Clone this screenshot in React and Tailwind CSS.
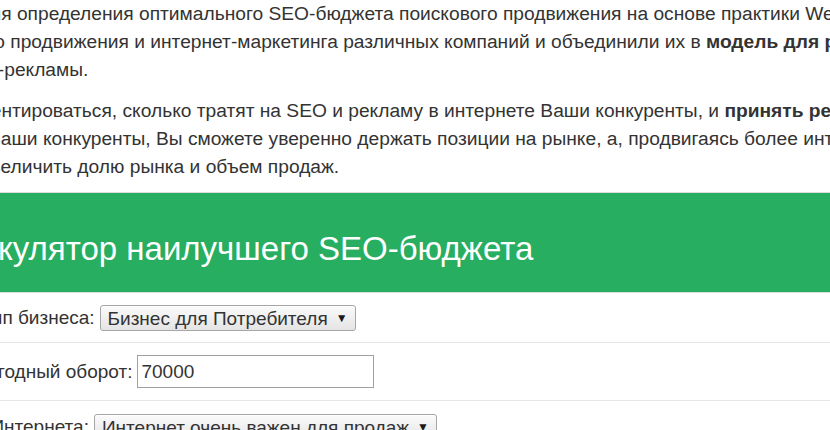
import React from 'react';

const Select = ({ value }) => (
  <div className="flex h-[26px] items-center rounded-[3px] border border-[#a6a6a6] bg-gradient-to-b from-[#fbfbfb] to-[#e4e4e4] pl-[7px] pr-[7px] text-[19px] leading-none text-[#333] shadow-[inset_0_1px_0_#fff]">
    <span>{value}</span>
    <span className="ml-[8px] text-[12px] text-[#1a1a1a]">▼</span>
  </div>
);

const App = () => {
  return (
    <div className="h-[430px] w-[830px] overflow-hidden bg-white font-['Liberation_Sans',Arial,sans-serif] text-[#333]">
      <div className="-ml-[23px] w-[1100px] text-[19.2px] leading-[28px]">
        <p className="mb-[13px] whitespace-nowrap">
          Для определения оптимального SEO-бюджета поискового продвижения на основе практики WebCanape
          <br />
          ого продвижения и интернет-маркетинга различных компаний и объединили их в <b>модель для расчета</b>
          <br />
          <span className="ml-[2px]">ет-рекламы.</span>
        </p>
        <p className="whitespace-nowrap">
          <span className="ml-[3px]">иентироваться, сколько тратят на SEO и рекламу в интернете Ваши конкуренты, и <b>принять решение</b></span>
          <br />
          <span className="ml-[11px]">Ваши конкуренты, Вы сможете уверенно держать позиции на рынке, а, продвигаясь более интенсивно,</span>
          <br />
          <span className="ml-[4px]">увеличить долю рынка и объем продаж.</span>
        </p>
      </div>

      <div className="mt-[11px] border-y border-[#dcdcdc]">
        <div className="h-[99px] bg-[#27ae60] pt-[38px]">
          <h2 className="-ml-[76px] whitespace-nowrap text-[33px] leading-[35px] text-white">
            Калькулятор наилучшего SEO-бюджета
          </h2>
        </div>
      </div>

      <div className="text-[19px] leading-[22px]">
        <div className="flex items-center gap-[5px] whitespace-nowrap border-b border-[#e6e6e6] pb-[11px] pt-[12px]">
          <span className="-ml-[19px]">Тип бизнеса:</span>
          <Select value="Бизнес для Потребителя" />
        </div>
        <div className="flex items-center gap-[5px] whitespace-nowrap border-b border-[#e6e6e6] pb-[12px] pt-[12px]">
          <span className="-ml-[38px]">Ежегодный оборот:</span>
          <input
            readOnly
            defaultValue="70000"
            className="h-[33px] w-[237px] border border-[#a0a0a0] bg-white px-[3px] text-[19px] text-[#333] outline-none"
          />
        </div>
        <div className="flex items-center gap-[5px] whitespace-nowrap pt-[13px]">
          <span className="-ml-[100px]">Важность Интернета:</span>
          <Select value="Интернет очень важен для продаж" />
        </div>
      </div>
    </div>
  );
};

export default App;
